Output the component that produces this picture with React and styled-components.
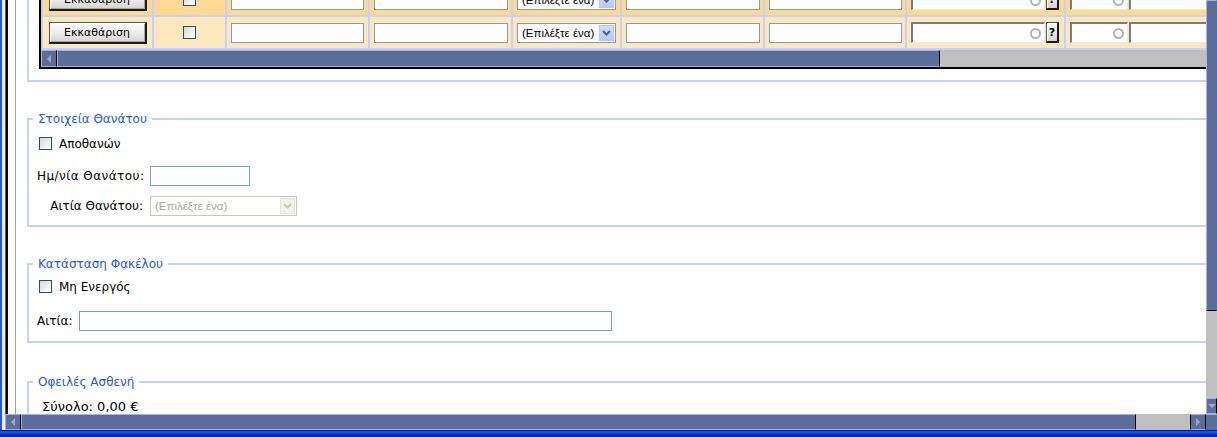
import React from 'react'
import styled, { createGlobalStyle } from 'styled-components'

const SLATE = '#5b6e99'
const SLATE_EDGE = '#a2b4e4'
const LAVENDER = '#c6d2f0'

const GlobalStyle = createGlobalStyle`
  html, body { margin: 0; padding: 0; overflow: hidden; background: #fff; }
  body { font-family: "DejaVu Sans", Verdana, sans-serif; font-size: 12px; color: #000; }
  * { box-sizing: border-box; }
`

const Screen = styled.div`
  width: 1217px;
  height: 437px;
  display: flex;
  flex-direction: column;
  overflow: hidden;
`
const Body = styled.div`
  flex: 1;
  min-height: 0;
  display: flex;
`
const WindowEdge = styled.div`
  flex: none;
  width: 5px;
  background: linear-gradient(to right, #2459d6 0 2px, #ececec 2px 5px);
`
const Viewport = styled.div`
  flex: 1;
  min-width: 0;
  display: grid;
  grid-template-columns: 1fr 11px;
  grid-template-rows: 1fr 16px;
`
const Canvas = styled.div`
  overflow: hidden;
  background: #fff;
  min-width: 0;
  min-height: 0;
`
// the document is scrolled a bit, the grid's first row is cut off
const Doc = styled.div`
  margin-top: -20px;
  min-height: 520px;
  border-left: 1px solid #555;
  display: flex;
`
const Frame = styled.div`
  border-left: 2px solid #000;
  padding-left: 7px;
  display: flex;
`
const Sheet = styled.div`
  width: 1260px;
  border-left: 1px solid #a0a0a0;
  padding-left: 11px;
`

/* ---- grid with the rows ---- */
const GridHolder = styled.div`
  width: 1240px;
  border-left: 2px solid ${LAVENDER};
  border-bottom: 2px solid ${LAVENDER};
  padding: 0 0 11px 10px;
`
const TableBox = styled.div`
  width: 1231px;
  border: 2px solid #000;
  background: #c8d1f5;
`
const Grid = styled.div`
  display: grid;
  grid-template-columns: 109px 71px 141px 141px 107px 141px 140px 157px 200px;
  grid-auto-rows: 31px;
  gap: 2px;
  padding: 2px;
`
const Cell = styled.div`
  background: ${p => (p.$alt ? '#fde8bd' : '#fdd994')};
  display: flex;
  align-items: center;
  justify-content: ${p => (p.$center ? 'center' : 'flex-start')};
  padding-left: ${p => (p.$center ? 0 : 4)}px;
  gap: 1px;
  overflow: hidden;
`
const ClearButton = styled.button`
  width: 98px;
  height: 22px;
  padding: 0;
  font-family: inherit;
  font-size: 11px;
  color: #000;
  border: 1px solid #555;
  border-right: 2px solid #1a1a1a;
  border-bottom: 2px solid #1a1a1a;
  box-shadow: inset 1px 1px #fff, inset -1px -1px #a8a8a8;
  background: linear-gradient(#fdfdfd, #ecebe8 55%, #d3d2cd);
`
const Check = styled.input.attrs({ type: 'checkbox' })`
  appearance: none;
  width: 13px;
  height: 13px;
  margin: 0 0 0 ${p => p.$ml || 0}px;
  flex: none;
  border: 1px solid #1c5180;
  background: linear-gradient(135deg, #d6d5cf, #fbfbfa 80%);
`
const TextBox = styled.input`
  width: ${p => p.$w}px;
  height: 20px;
  flex: none;
  margin: 0;
  padding: 0 3px;
  font-family: inherit;
  font-size: 11px;
  border: 1px solid #7f9db9;
  background: #fff;
`
const SelectBox = styled.div`
  width: ${p => p.$w}px;
  height: ${p => p.$h || 20}px;
  flex: none;
  display: flex;
  align-items: center;
  justify-content: space-between;
  border: 1px solid ${p => (p.$disabled ? '#c9c7ba' : '#7f9db9')};
  background: #fff;
  padding: 1px;
`
const SelectText = styled.span`
  padding-left: 3px;
  font-family: "Liberation Sans", Arial, sans-serif;
  font-size: 11.5px;
  color: ${p => (p.$disabled ? '#aca899' : '#000')};
  white-space: nowrap;
`
const DropButton = styled.span`
  width: 15px;
  height: 100%;
  display: flex;
  align-items: center;
  justify-content: center;
  border: 1px solid ${p => (p.$disabled ? '#e6e4dc' : '#b4c7f5')};
  background: ${p => (p.$disabled ? '#f1f0ea' : 'linear-gradient(#d3e0fd, #b6c9f7)')};
`
const Inset = styled.div`
  width: ${p => p.$w}px;
  height: 21px;
  flex: none;
  display: flex;
  align-items: center;
  border-style: solid;
  border-width: 2px 1px 1px 2px;
  border-color: #7c7c7c #ecebe4 #ecebe4 #7c7c7c;
  background: #fff;
  padding-right: 3px;
`
const InsetInput = styled.input`
  flex: 1;
  min-width: 0;
  height: 100%;
  border: 0;
  margin: 0;
  padding: 0 3px;
  background: transparent;
`
const Ring = styled.span`
  width: 11px;
  height: 11px;
  flex: none;
  border: 2px solid #b4b4b4;
  border-radius: 50%;
`
const HelpButton = styled.button`
  width: 13px;
  height: 21px;
  flex: none;
  padding: 0;
  font-family: "DejaVu Sans", sans-serif;
  font-size: 11px;
  font-weight: bold;
  color: #000;
  border: 1px solid #555;
  border-right: 2px solid #1a1a1a;
  border-bottom: 2px solid #1a1a1a;
  box-shadow: inset 1px 1px #fff;
  background: linear-gradient(#fafafa, #d6d5d0);
`

/* ---- scroll bars ---- */
const HBar = styled.div`
  height: ${p => p.$h}px;
  display: flex;
  background: #c0c0c0;
`
const VBar = styled.div`
  display: flex;
  flex-direction: column;
  background: #c0c0c0;
`
const Track = styled.div`
  flex: 1;
`
const Thumb = styled.div`
  flex: none;
  width: ${p => (p.$vertical ? 'auto' : `${p.$size}px`)};
  height: ${p => (p.$vertical ? `${p.$size}px` : 'auto')};
  background: ${SLATE};
  border: 1px solid ${SLATE_EDGE};
  border-right-color: ${p => (p.$vertical ? SLATE : '#000')};
  border-bottom-color: ${p => (p.$vertical ? '#000' : SLATE_EDGE)};
`
const arrowShape = {
  left: 'border-width: 4px 4px 4px 0; border-color: transparent #a6a9bd transparent transparent;',
  right: 'border-width: 4px 0 4px 4px; border-color: transparent transparent transparent #a6a9bd;',
  down: 'border-width: 4px 4px 0 4px; border-color: #a6a9bd transparent transparent transparent;',
}
const ArrowButton = styled.div`
  flex: none;
  width: ${p => (p.$dir === 'down' ? 'auto' : '16px')};
  height: ${p => (p.$dir === 'down' ? '16px' : 'auto')};
  display: flex;
  align-items: center;
  justify-content: center;
  background: ${SLATE};
  border: 1px solid ${SLATE_EDGE};
  border-right: 1px solid #000;
  ${p => (p.$dir === 'right' ? 'border-left: 1px solid #000;' : '')}
  &::after {
    content: '';
    border-style: solid;
    ${p => arrowShape[p.$dir]}
  }
`
const Corner = styled.div`
  background: ${SLATE};
  border-top: 1px solid #9fb0dc;
`
const TaskEdge = styled.div`
  height: 7px;
  flex: none;
  background: linear-gradient(#001c78 0 1px, #1f4fe0 1px 3px, #0b35c8 3px 5px, #0a2a9c 5px);
`

/* ---- field groups ---- */
const Group = styled.fieldset`
  width: 1230px;
  min-width: 0;
  margin: ${p => p.$top}px 0 0;
  padding: 0 0 ${p => p.$bottom}px 8px;
  border: 2px solid ${LAVENDER};
`
const Legend = styled.legend`
  color: #2559d9;
  font-size: 12px;
  line-height: 14px;
  padding: 0 5px;
  margin-left: -4px;
`
const CheckRow = styled.label`
  display: flex;
  align-items: center;
  gap: 7px;
  height: 13px;
  margin-top: ${p => p.$top}px;
`
const FormGrid = styled.div`
  display: grid;
  grid-template-columns: ${p => p.$label}px auto;
  justify-content: start;
  align-items: center;
  column-gap: 7px;
  row-gap: 10px;
  margin-top: ${p => p.$top}px;
`
const FieldLabel = styled.span`
  text-align: right;
  white-space: nowrap;
  letter-spacing: ${p => p.$spread || 0}px;
`
const Total = styled.div`
  margin-top: 10px;
  padding-left: 5px;
  font-size: 13px;
  line-height: 15px;
`

const Chevron = ({ color }) => (
  <svg width="9" height="6" viewBox="0 0 9 6">
    <path d="M1 1 L4.5 4.5 L8 1" fill="none" stroke={color} strokeWidth="2" />
  </svg>
)

const GridRow = ({ alt }) => (
  <>
    <Cell $alt={alt} $center>
      <ClearButton>Εκκαθάριση</ClearButton>
    </Cell>
    <Cell $alt={alt} $center>
      <Check />
    </Cell>
    <Cell $alt={alt}><TextBox $w={133} /></Cell>
    <Cell $alt={alt}><TextBox $w={134} /></Cell>
    <Cell $alt={alt}>
      <SelectBox $w={99}>
        <SelectText>(Επιλέξτε ένα)</SelectText>
        <DropButton><Chevron color="#4d6185" /></DropButton>
      </SelectBox>
    </Cell>
    <Cell $alt={alt}><TextBox $w={134} /></Cell>
    <Cell $alt={alt}><TextBox $w={133} /></Cell>
    <Cell $alt={alt}>
      <Inset $w={134}><InsetInput /><Ring /></Inset>
      <HelpButton>?</HelpButton>
    </Cell>
    <Cell $alt={alt}>
      <Inset $w={58}><InsetInput /><Ring /></Inset>
      <Inset $w={140}><InsetInput /></Inset>
    </Cell>
  </>
)

export default function App() {
  return (
    <Screen>
      <GlobalStyle />
      <Body>
        <WindowEdge />
        <Viewport>
          <Canvas>
            <Doc>
              <Frame>
                <Sheet>
                  <GridHolder>
                    <TableBox>
                      <Grid>
                        <GridRow />
                        <GridRow alt />
                      </Grid>
                      <HBar $h={17}>
                        <ArrowButton $dir="left" />
                        <Thumb $size={883} />
                        <Track />
                      </HBar>
                    </TableBox>
                  </GridHolder>

                  <Group $top={30} $bottom={9}>
                    <Legend>Στοιχεία Θανάτου</Legend>
                    <CheckRow $top={11}>
                      <Check $ml={2} />
                      Αποθανών
                    </CheckRow>
                    <FormGrid $label={106} $top={16}>
                      <FieldLabel $spread={0.45}>Ημ/νία Θανάτου:</FieldLabel>
                      <TextBox $w={100} />
                      <FieldLabel>Αιτία Θανάτου:</FieldLabel>
                      <SelectBox $w={147} $h={20} $disabled>
                        <SelectText $disabled>(Επιλέξτε ένα)</SelectText>
                        <DropButton $disabled><Chevron color="#c9c7ba" /></DropButton>
                      </SelectBox>
                    </FormGrid>
                  </Group>

                  <Group $top={30} $bottom={10}>
                    <Legend>Κατάσταση Φακέλου</Legend>
                    <CheckRow $top={9}>
                      <Check $ml={2} />
                      Μη Ενεργός
                    </CheckRow>
                    <FormGrid $label={35} $top={18}>
                      <FieldLabel>Αιτία:</FieldLabel>
                      <TextBox $w={533} />
                    </FormGrid>
                  </Group>

                  <Group $top={32} $bottom={40}>
                    <Legend>Οφειλές Ασθενή</Legend>
                    <Total>Σύνολο: 0,00 €</Total>
                  </Group>
                </Sheet>
              </Frame>
            </Doc>
          </Canvas>

          <VBar>
            <Thumb $vertical $size={311} />
            <Track />
            <ArrowButton $dir="down" />
          </VBar>

          <HBar $h={16}>
            <ArrowButton $dir="left" />
            <Thumb $size={1115} />
            <Track />
            <ArrowButton $dir="right" />
          </HBar>
          <Corner />
        </Viewport>
      </Body>
      <TaskEdge />
    </Screen>
  )
}
